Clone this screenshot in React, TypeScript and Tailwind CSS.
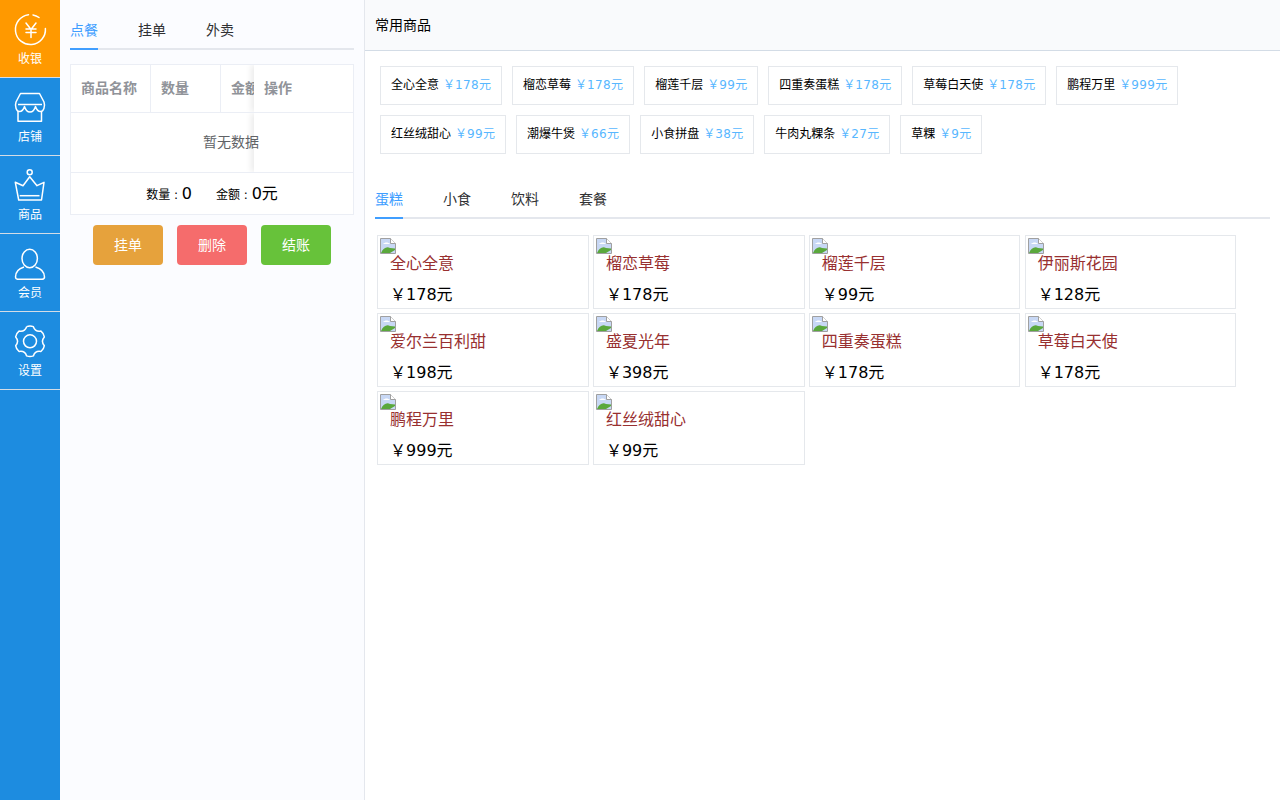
import React from "react";

const font = { fontFamily: '"DejaVu Sans", "Noto Sans CJK SC", sans-serif' };

const Cashier = () => (
  <svg width="34" height="34" viewBox="0 0 34 34" fill="none" stroke="white" strokeWidth="1.5" strokeLinecap="round">
    <path d="M15.500 2.700A15 15 0 1 0 32.400 16.500" />
    <path d="M20 2.900A15 15 0 0 1 26 5.500" />
    <path d="M13 11l5 6.500 5-6.500M18 17.500V25.500M13 17h10M13 20.500h10" />
  </svg>
);
const Shop = () => (
  <svg width="34" height="34" viewBox="0 0 34 34" fill="none" stroke="white" strokeWidth="1.5" strokeLinejoin="round">
    <path d="M7.500 3.500H26.500L31 12C32.500 16.500 30.500 21.500 27.500 21.500C25 21.500 23.500 19.500 22.500 16.500C21.500 20 19.500 22 17 22C14.500 22 12.500 20 11.500 16.500C10.500 19.500 9 21.500 6.500 21.500C3.500 21.500 1.500 16.500 3 12Z" />
    <path d="M5 14.500H29" />
    <path d="M5 21V31.300H28.500V21" />
  </svg>
);
const Crown = () => (
  <svg width="34" height="34" viewBox="0 0 34 34" fill="none" stroke="white" strokeWidth="1.5" strokeLinejoin="round">
    <circle cx="16.700" cy="4.300" r="2.500" />
    <path d="M2.300 14.300L10 17.700L16.700 8.700L24 17.700L31 14.300L28.500 32H5.700Z" />
    <path d="M6.700 27.700H26.500" />
  </svg>
);
const Member = () => (
  <svg width="34" height="34" viewBox="0 0 34 34" fill="none" stroke="white" strokeWidth="1.5" strokeLinejoin="round">
    <ellipse cx="16.700" cy="12.500" rx="7.700" ry="9.200" />
    <path d="M11 21C6 22.500 2.500 26 2.500 31C2.500 32.500 3.500 33.300 5 33.300H28.500C30 33.300 31.500 32.500 31.500 31C31.500 26 27.500 22.500 22.500 21" />
  </svg>
);

// six rounded teeth, built around the centre of the icon
const gearPoint = (deg: number, r: number) => {
  const a = (deg * Math.PI) / 180;
  return `${(17 + r * Math.cos(a)).toFixed(2)} ${(17.3 + r * Math.sin(a)).toFixed(2)}`;
};
const gearPath = [0, 1, 2, 3, 4, 5]
  .map((k) => {
    const a = -90 + 60 * k;
    const start = `${k === 0 ? "M" : "L"}${gearPoint(a - 13, 15)}`;
    return `${start}Q${gearPoint(a, 16)} ${gearPoint(a + 13, 15)}Q${gearPoint(a + 30, 10.500)} ${gearPoint(a + 47, 15)}`;
  })
  .join("");

const Gear = () => (
  <svg width="34" height="34" viewBox="0 0 34 34" fill="none" stroke="white" strokeWidth="1.5" strokeLinejoin="round">
    <path d={gearPath} />
    <circle cx="17" cy="17.300" r="6.500" />
  </svg>
);

// stand-in for the browser's missing picture glyph
const BrokenImage = () => (
  <svg className="absolute left-[2px] top-[2px]" width="16" height="16" viewBox="0 0 16 16">
    <path d="M.5.500h10l5 5v10H.5z" fill="#c8d8f5" stroke="#a0a0a0" />
    <path d="M10.500.500v5h5" fill="white" stroke="#a0a0a0" />
    <path d="M1 15c2-5 6-7 9-5l5 .5v1.500l-5 3z" fill="#5aa83c" />
    <path d="M3 6c2-2 5-2 7 0z" fill="white" />
  </svg>
);

const navItems = [
  { label: "收银", icon: <Cashier />, active: true },
  { label: "店铺", icon: <Shop /> },
  { label: "商品", icon: <Crown /> },
  { label: "会员", icon: <Member /> },
  { label: "设置", icon: <Gear /> },
];

const common = [
  ["全心全意", "178"],
  ["榴恋草莓", "178"],
  ["榴莲千层", "99"],
  ["四重奏蛋糕", "178"],
  ["草莓白天使", "178"],
  ["鹏程万里", "999"],
  ["红丝绒甜心", "99"],
  ["潮爆牛煲", "66"],
  ["小食拼盘", "38"],
  ["牛肉丸粿条", "27"],
  ["草粿", "9"],
];

const goods = [
  ["全心全意", "178"],
  ["榴恋草莓", "178"],
  ["榴莲千层", "99"],
  ["伊丽斯花园", "128"],
  ["爱尔兰百利甜", "198"],
  ["盛夏光年", "398"],
  ["四重奏蛋糕", "178"],
  ["草莓白天使", "178"],
  ["鹏程万里", "999"],
  ["红丝绒甜心", "99"],
];

const Tabs = ({ items }: { items: string[] }) => (
  <div className="flex gap-10 h-[40px] border-b-2 border-[#e4e7ed] text-sm text-[#303133]">
    {items.map((t, i) => (
      <div
        key={t}
        className={`h-[40px] leading-[40px] ${i === 0 ? "text-[#409eff] border-b-2 border-[#409eff]" : ""}`}
      >
        {t}
      </div>
    ))}
  </div>
);

export default function App() {
  return (
    <div className="flex h-[800px] w-[1280px] overflow-hidden bg-white" style={font}>
      {/* nav */}
      <aside className="w-[60px] shrink-0 bg-[#1d8ce0]">
        {navItems.map((item) => (
          <div
            key={item.label}
            className={`h-[78px] flex flex-col items-center pt-[12px] border-b border-[#d3dce6] text-xs text-white ${
              item.active ? "bg-[#ff9900]" : ""
            }`}
          >
            {item.icon}
            <span className="mt-[5px] leading-[16px]">{item.label}</span>
          </div>
        ))}
      </aside>

      {/* order panel */}
      <section className="w-[305px] shrink-0 bg-[#fbfcff] border-r border-[#e4e7ed] pl-[10px] pr-[10px] pt-[10px]">
        <Tabs items={["点餐", "挂单", "外卖"]} />
        <div className="mt-[14px] border border-[#ebeef5] bg-white">
          <div className="relative h-[48px] flex border-b border-[#ebeef5] text-sm font-bold text-[#909399] overflow-hidden">
            <div className="w-[80px] shrink-0 pl-[10px] leading-[47px] border-r border-[#ebeef5]">商品名称</div>
            <div className="w-[70px] shrink-0 pl-[10px] leading-[47px] border-r border-[#ebeef5]">数量</div>
            <div className="w-[70px] shrink-0 pl-[10px] leading-[47px]">金额</div>
            <div className="absolute right-0 top-0 bottom-0 w-[99px] pl-[10px] leading-[47px] bg-white shadow-[-3px_0_6px_rgba(0,0,0,0.08)]">操作</div>
          </div>
          <div className="relative h-[60px] border-b border-[#ebeef5] overflow-hidden">
            <div className="absolute right-0 top-0 bottom-0 w-[99px] bg-white shadow-[-3px_0_6px_rgba(0,0,0,0.08)]" />
            <div className="relative w-[320px] text-center text-sm leading-[59px] text-[#606266]">暂无数据</div>
          </div>
          <div className="h-[41px] flex items-center justify-center gap-[24px] text-xs text-black">
            <span>数量 : <span className="text-base">0</span></span>
            <span>金额 : <span className="text-base">0元</span></span>
          </div>
        </div>
        <div className="mt-[10px] flex justify-center gap-[14px] text-sm text-white">
          <button className="w-[70px] h-[40px] rounded bg-[#e6a23c]">挂单</button>
          <button className="w-[70px] h-[40px] rounded bg-[#f56c6c]">删除</button>
          <button className="w-[70px] h-[40px] rounded bg-[#67c23a]">结账</button>
        </div>
      </section>

      {/* goods */}
      <main className="flex-1">
        <div className="h-[51px] bg-[#f9fafc] border-b border-[#d3dce6] pl-[10px] text-sm leading-[50px] text-black">常用商品</div>
        <div className="flex flex-wrap gap-[10px] pl-[15px] pt-[15px] text-xs">
          {common.map(([name, price]) => (
            <div key={name} className="h-[39px] px-[10px] border border-[#e5e8ec] bg-white leading-[37px] text-black">
              {name}
              <span className="ml-[4px] text-[#58b7ff]">￥<span className="tracking-[0.37px]">{price}</span>元</span>
            </div>
          ))}
        </div>
        <div className="mt-[25px] mx-[10px]">
          <Tabs items={["蛋糕", "小食", "饮料", "套餐"]} />
        </div>
        <div className="mt-[16px] ml-[12px] flex flex-wrap gap-x-[4.2px] gap-y-[4px] w-[880px]">
          {goods.map(([name, price]) => (
            <div key={name} className="relative w-[211.7px] h-[74px] border border-[#e5e8ec] bg-white">
              <BrokenImage />
              <div className="pl-[12px] pt-[17px] text-base leading-[22px] text-[#983030]">{name}</div>
              <div className="pl-[12px] mt-[9px] text-base leading-[22px] text-black">￥{price}元</div>
            </div>
          ))}
        </div>
      </main>
    </div>
  );
}
